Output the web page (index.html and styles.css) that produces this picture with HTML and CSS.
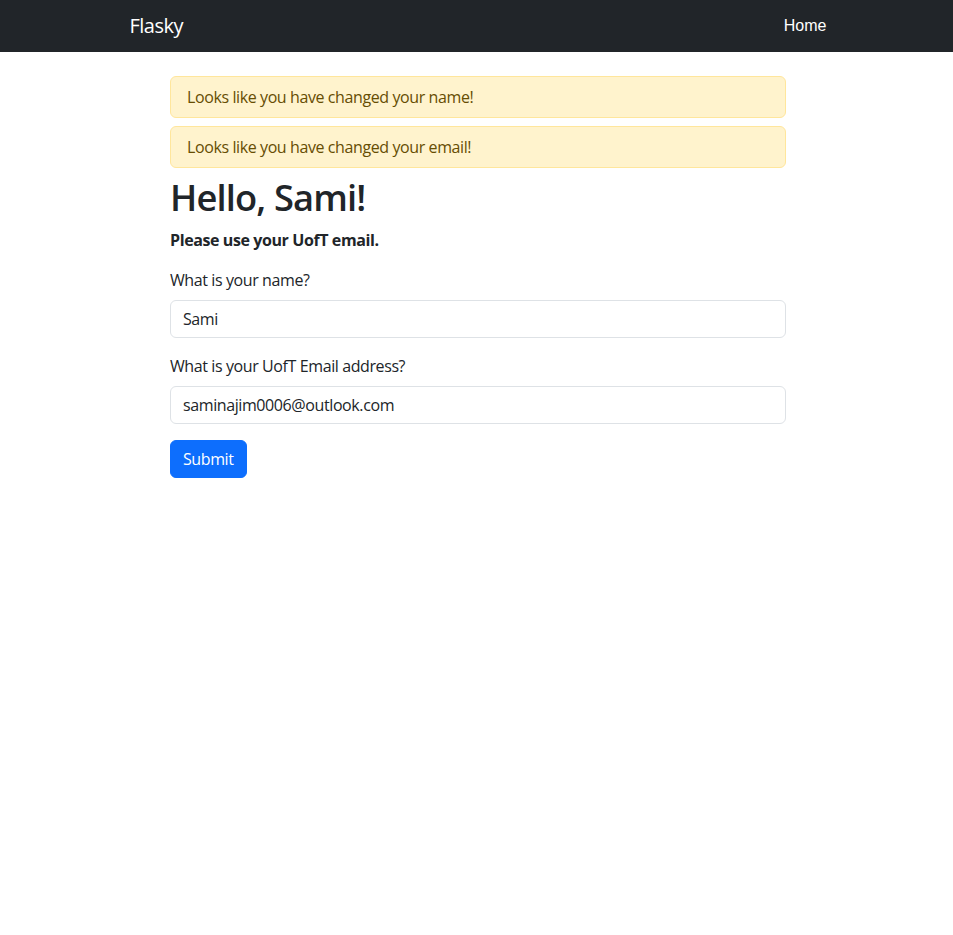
FILE: index.html
```html
<!DOCTYPE html>
<html lang="en">
<head>
<meta charset="utf-8">
<title>Flasky</title>
<link rel="stylesheet" href="styles.css">
</head>
<body>
<nav class="navbar">
  <div class="navbar-inner">
    <a class="brand" href="#">Flasky</a>
    <a class="nav-link" href="#">Home</a>
  </div>
</nav>
<main class="container">
  <div class="alert">Looks like you have changed your name!</div>
  <div class="alert">Looks like you have changed your email!</div>
  <h1 class="title">Hello, Sami!</h1>
  <p class="note">Please use your UofT email.</p>
  <form class="form">
    <div class="field">
      <label class="label" for="name">What is your name?</label>
      <input class="input" id="name" type="text" value="Sami">
    </div>
    <div class="field">
      <label class="label" for="email">What is your UofT Email address?</label>
      <input class="input" id="email" type="text" value="saminajim0006@outlook.com">
    </div>
    <button class="btn" type="button">Submit</button>
  </form>
</main>
</body>
</html>
```
FILE: styles.css
```css
* { box-sizing: border-box; }
html, body { margin: 0; padding: 0; }
body {
  font-family: "Open Sans", "Noto Sans", sans-serif;
  font-size: 16px;
  line-height: 1.5;
  letter-spacing: -0.4px;
  color: #212529;
  background: #fff;
}
.navbar {
  background: #212529;
  height: 52px;
}
.navbar-inner {
  width: 700px;
  margin: 0 auto;
  height: 100%;
  padding-left: 3px;
  display: flex;
  align-items: center;
  justify-content: space-between;
}
.brand {
  color: #fff;
  font-size: 20px;
  letter-spacing: -0.5px;
  text-decoration: none;
  line-height: 30px;
}
.nav-link {
  color: #fff;
  font-family: "Liberation Sans", Arial, sans-serif;
  font-size: 16px;
  letter-spacing: 0;
  text-decoration: none;
}
.container {
  width: 619px;
  margin: 24px auto 0;
  padding-left: 3px;
}
.alert {
  background: #fff3cd;
  border: 1px solid #ffe69c;
  color: #664d03;
  border-radius: 6px;
  padding: 8px 16px;
  margin-bottom: 8px;
}
.title {
  font-size: 36.3px;
  font-weight: 600;
  letter-spacing: -0.85px;
  line-height: 1.2;
  margin: 0 0 8px;
}
.note {
  font-weight: 700;
  margin: 0 0 16px;
}
.form { margin: 0; }
.field { margin-bottom: 16px; }
.label {
  display: block;
  margin-bottom: 8px;
}
.input {
  display: block;
  width: 100%;
  height: 38px;
  padding: 6px 12px;
  font: inherit;
  letter-spacing: inherit;
  color: #212529;
  border: 1px solid #dee2e6;
  border-radius: 6px;
  background: #fff;
}
.btn {
  font: inherit;
  letter-spacing: inherit;
  color: #fff;
  background: #0d6efd;
  border: 1px solid #0d6efd;
  border-radius: 6px;
  padding: 6px 12px;
  height: 38px;
  line-height: 24px;
}
```
